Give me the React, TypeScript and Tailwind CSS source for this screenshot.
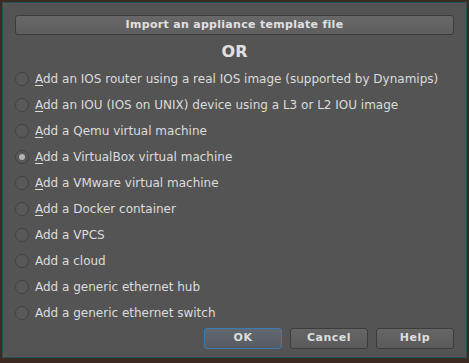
const options = [
  { label: 'Add an IOS router using a real IOS image (supported by Dynamips)', mnemonic: true },
  { label: 'Add an IOU (IOS on UNIX) device using a L3 or L2 IOU image', mnemonic: true },
  { label: 'Add a Qemu virtual machine', mnemonic: true },
  { label: 'Add a VirtualBox virtual machine', mnemonic: true, checked: true },
  { label: 'Add a VMware virtual machine', mnemonic: true },
  { label: 'Add a Docker container', mnemonic: true },
  { label: 'Add a VPCS' },
  { label: 'Add a cloud' },
  { label: 'Add a generic ethernet hub' },
  { label: 'Add a generic ethernet switch' },
];

function Radio({ checked }: { checked?: boolean }) {
  return (
    <span className="flex h-[14px] w-[14px] shrink-0 items-center justify-center rounded-full border border-[#434343] bg-[#585858]">
      {checked && <span className="h-[6px] w-[6px] rounded-full bg-[#b4b4b4]" />}
    </span>
  );
}

function DlgButton({ text, focused }: { text: string; focused?: boolean }) {
  return (
    <button
      className={
        'h-[21px] w-[78px] rounded-[3px] border text-[11px] font-bold tracking-[0.5px] text-[#dedede] ' +
        (focused
          ? 'border-[#3b7bb3] bg-gradient-to-b from-[#626870] to-[#575c63]'
          : 'border-[#3c3c3c] bg-gradient-to-b from-[#666666] to-[#5a5a5a]')
      }
    >
      {text}
    </button>
  );
}

export default function App() {
  return (
    <div className="h-[363px] w-[469px] bg-[#3b2a22] pl-[2px] pt-[2px]" style={{ fontFamily: '"DejaVu Sans", sans-serif' }}>
      <div className="flex h-[356px] w-[465px] flex-col border border-[#24505a] bg-[#545454] px-[12px] pt-[12px]">
        <button className="h-[20px] w-full rounded-[3px] border border-[#3c3c3c] bg-gradient-to-b from-[#686868] to-[#5e5e5e] text-[11px] font-bold tracking-[0.3px] text-[#e0e0e0]">
          Import an appliance template file
        </button>
        <div className="mt-[7px] text-center text-[16px] font-bold leading-[20px] text-[#e0e0e0]">OR</div>
        <div className="mt-[4px] flex flex-col">
          {options.map((o) => (
            <label key={o.label} className="flex h-[26px] items-center gap-[6px] text-[12px] text-[#dcdcdc]">
              <Radio checked={o.checked} />
              <span>
                {o.mnemonic ? (
                  <>
                    <span className="underline underline-offset-2">A</span>
                    {o.label.slice(1)}
                  </>
                ) : (
                  o.label
                )}
              </span>
            </label>
          ))}
        </div>
        <div className="mt-[2px] flex justify-end gap-[8px]">
          <DlgButton text="OK" focused />
          <DlgButton text="Cancel" />
          <DlgButton text="Help" />
        </div>
      </div>
    </div>
  );
}
